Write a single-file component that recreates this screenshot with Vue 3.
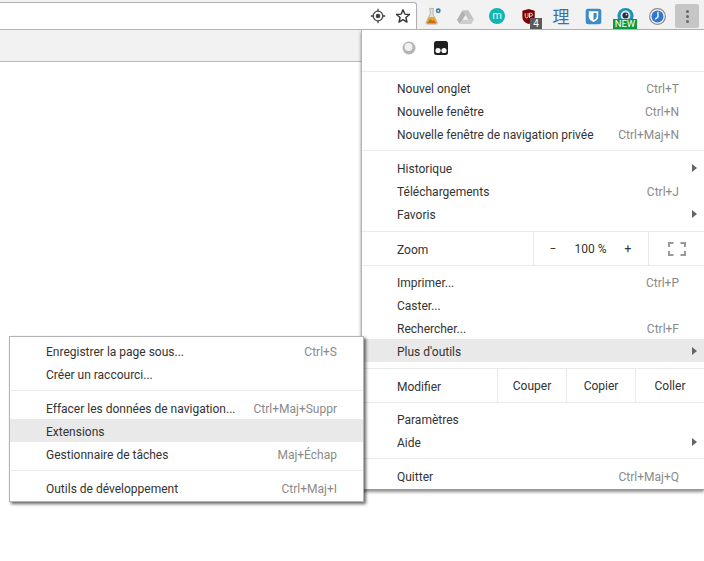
<template>
  <div class="screen">
    <!-- Toolbar -->
    <header class="toolbar">
      <div class="omnibox">
        <svg class="omni-icon" viewBox="0 0 16 16">
          <circle cx="8" cy="8" r="4.8" fill="none" stroke="#444" stroke-width="1.3" />
          <circle cx="8" cy="8" r="2.3" fill="#444" />
          <path d="M8 .8v2.4M8 12.8v2.4M.8 8h2.4M12.8 8h2.4" stroke="#444" stroke-width="1.3" />
        </svg>
        <svg class="omni-icon star" viewBox="0 0 16 16">
          <path d="M8 1.8l1.8 4.3 4.7.4-3.6 3 1.1 4.6L8 11.7l-4 2.4 1.1-4.6-3.6-3 4.7-.4z" fill="none" stroke="#333" stroke-width="1.4" stroke-linejoin="round" />
        </svg>
      </div>
      <div class="ext-row">
        <div class="ext">
          <svg viewBox="0 0 20 20" class="ext-svg">
            <path d="M6 1.500h4v1h-.5v5l4.300 8.500c.5 1-.1 2-1.200 2H3.400c-1.100 0-1.700-1-1.200-2L6.500 7.500v-5H6z" fill="#e4dfd6" stroke="#a9a59c" stroke-width=".8" />
            <path d="M5 10.500h6l2.300 5.700c.3.800-.1 1.300-.8 1.300H3.500c-.7 0-1.100-.5-.8-1.300z" fill="#e9a92c" />
            <path d="M3 17.200l3.500-4.200 2 2 1.500-1.500 3 3.700z" fill="#d9641e" />
            <circle cx="7" cy="14.500" r="1.300" fill="#6f9a35" />
            <circle cx="15" cy="4" r="2.600" fill="#3a7c99" />
            <circle cx="15" cy="4" r=".9" fill="#fff" />
          </svg>
        </div>
        <div class="ext">
          <svg viewBox="0 0 20 20" class="ext-svg">
            <path d="M7 3.500h6l6 10h-6z" fill="#c2c2c2" />
            <path d="M7 3.500l-6 10 3 4.500L10 8.500z" fill="#b2b2b2" />
            <path d="M7 13.500h12l-3 4.500H4z" fill="#cdcdcd" />
          </svg>
        </div>
        <div class="ext">
          <span class="m-badge">m</span>
        </div>
        <div class="ext">
          <svg viewBox="0 0 20 20" class="ext-svg shield">
            <path d="M9 2l6.500 2v6.500c0 3.800-3 6-6.500 7.500-3.500-1.500-6.500-3.700-6.500-7.500V4z" fill="#800000" />
            <path d="M5.500 6.500v3.500c0 1 .6 1.500 1.500 1.500s1.500-.5 1.500-1.500V6.500M10 11.500v-5h1.500a1.500 1.500 0 010 3.200H10" fill="none" stroke="#f3e3e3" stroke-width="1" />
          </svg>
          <span class="count">4</span>
        </div>
        <div class="ext">
          <span class="li">理</span>
        </div>
        <div class="ext">
          <svg viewBox="0 0 20 20" class="ext-svg">
            <rect x="1.800" y="1.800" width="16.400" height="16.400" rx="2.500" fill="#3c8dc6" />
            <path d="M5 4.500h10v5.800c0 2.700-2.400 4.300-5 5.400-2.600-1.100-5-2.700-5-5.400z" fill="#fff" />
            <path d="M10 6.200h3.300v4.100c0 1.700-1.600 2.800-3.300 3.600z" fill="#3c8dc6" />
          </svg>
        </div>
        <div class="ext">
          <svg viewBox="0 0 20 20" class="ext-svg">
            <circle cx="10" cy="9.500" r="8.500" fill="#1f90b4" />
            <circle cx="10" cy="9" r="5.200" fill="#d6e2e6" />
            <circle cx="10" cy="9" r="3.200" fill="#22333f" />
            <circle cx="11" cy="8" r=".9" fill="#cfd8dc" />
          </svg>
          <span class="new">NEW</span>
        </div>
        <div class="ext">
          <svg viewBox="0 0 20 20" class="ext-svg">
            <circle cx="10" cy="10" r="8.300" fill="#f4f4f4" stroke="#8b8b8b" stroke-width="1.300" />
            <circle cx="10" cy="10" r="6.300" fill="#2f77cf" />
            <path d="M10.500 5v5.500L7.500 13" fill="none" stroke="#fff" stroke-width="1.400" />
          </svg>
        </div>
      </div>
      <button class="kebab">
        <i></i><i></i><i></i>
      </button>
    </header>

    <div class="body">
      <!-- Page behind the menu -->
      <div class="page">
        <div class="page-bar"></div>
      </div>

      <!-- Main menu -->
      <nav class="menu">
        <div class="menu-icons">
          <svg viewBox="0 0 16 16" class="menu-icon">
            <circle cx="8" cy="8" r="6.500" fill="#b4b4b4" />
            <circle cx="7.500" cy="7" r="4" fill="#f0f0f0" />
          </svg>
          <svg viewBox="0 0 16 16" class="menu-icon">
            <path d="M3.500 1h9A2.500 2.500 0 0115 3.500V12.500a2.500 2.500 0 01-2.500 2.500h-9A2.500 2.500 0 011 12.500V3.500A2.500 2.500 0 013.500 1z" fill="#202020" />
            <circle cx="5" cy="10.500" r="2.600" fill="#fff" />
            <circle cx="11" cy="10.500" r="2.600" fill="#fff" />
          </svg>
        </div>
        <template v-for="(group, g) in mainGroups" :key="g">
          <div class="sep"></div>
          <div v-if="group.type === 'zoom'" class="split-row">
            <span class="split-label">Zoom</span>
            <div class="zoom-cell">
              <span class="zoom-btn">−</span>
              <span class="zoom-val">100 %</span>
              <span class="zoom-btn">+</span>
            </div>
            <div class="full-cell">
              <svg viewBox="0 0 18 14" class="full-icon">
                <path d="M1 5V1h4.500M12.500 1H17v4M17 9v4h-4.500M5.500 13H1V9" fill="none" stroke="#999" stroke-width="2" />
              </svg>
            </div>
          </div>
          <div v-else-if="group.type === 'edit'" class="split-row">
            <span class="split-label">Modifier</span>
            <span v-for="a in group.actions" :key="a" class="edit-btn">{{ a }}</span>
          </div>
          <div v-else class="group" :class="group.pad">
            <div v-for="item in group.items" :key="item.label" class="row" :class="{ active: item.active }">
              <span class="label">{{ item.label }}</span>
              <span v-if="item.key" class="key">{{ item.key }}</span>
              <span v-if="item.sub" class="arrow"></span>
            </div>
          </div>
        </template>
      </nav>

      <!-- Submenu -->
      <div class="submenu">
        <template v-for="(group, g) in subGroups" :key="g">
          <div v-if="g > 0" class="sep"></div>
          <div class="group">
            <div v-for="item in group" :key="item.label" class="row" :class="{ active: item.active }">
              <span class="label">{{ item.label }}</span>
              <span v-if="item.key" class="key">{{ item.key }}</span>
            </div>
          </div>
        </template>
      </div>
    </div>
  </div>
</template>

<script setup>
const mainGroups = [
  { pad: 'first', items: [
    { label: 'Nouvel onglet', key: 'Ctrl+T' },
    { label: 'Nouvelle fenêtre', key: 'Ctrl+N' },
    { label: 'Nouvelle fenêtre de navigation privée', key: 'Ctrl+Maj+N' }
  ] },
  { pad: 'second', items: [
    { label: 'Historique', sub: true },
    { label: 'Téléchargements', key: 'Ctrl+J' },
    { label: 'Favoris', sub: true }
  ] },
  { type: 'zoom' },
  { pad: 'tools', items: [
    { label: 'Imprimer...', key: 'Ctrl+P' },
    { label: 'Caster...' },
    { label: 'Rechercher...', key: 'Ctrl+F' },
    { label: "Plus d'outils", sub: true, active: true }
  ] },
  { type: 'edit', actions: ['Couper', 'Copier', 'Coller'] },
  { pad: 'first', items: [
    { label: 'Paramètres' },
    { label: 'Aide', sub: true }
  ] },
  { pad: 'last', items: [
    { label: 'Quitter', key: 'Ctrl+Maj+Q' }
  ] }
]

const subGroups = [
  [
    { label: 'Enregistrer la page sous...', key: 'Ctrl+S' },
    { label: 'Créer un raccourci...' }
  ],
  [
    { label: 'Effacer les données de navigation...', key: 'Ctrl+Maj+Suppr' },
    { label: 'Extensions', active: true },
    { label: 'Gestionnaire de tâches', key: 'Maj+Échap' }
  ],
  [
    { label: 'Outils de développement', key: 'Ctrl+Maj+I' }
  ]
]
</script>

<style>
html, body {
  background: #fff;
}
</style>

<style scoped>
.screen {
  width: 704px;
  height: 561px;
  overflow: hidden;
  display: flex;
  flex-direction: column;
  font-family: Roboto, "Liberation Sans", sans-serif;
  font-size: 12px;
  color: #333;
  background: #fff;
}

/* Toolbar */
.toolbar {
  height: 30px;
  flex: none;
  display: flex;
  background: #f2f2f2;
  border-bottom: 1px solid #b4b4b4;
  box-sizing: border-box;
}

.omnibox {
  width: 417px;
  margin-top: 2px;
  flex: none;
  box-sizing: border-box;
  background: #fff;
  border: 1px solid #b0b0b0;
  border-left: 0;
  border-bottom: 0;
  border-top-right-radius: 3px;
  display: flex;
  justify-content: flex-end;
  align-items: center;
  gap: 9px;
  padding-right: 5px;
}

.omni-icon {
  width: 16px;
  height: 16px;
}

.ext-row {
  display: flex;
  width: 256px;
}

.ext {
  position: relative;
  width: 32px;
  height: 29px;
  display: flex;
  align-items: center;
  justify-content: center;
  padding-top: 3px;
  box-sizing: border-box;
}

.ext-svg {
  width: 19px;
  height: 19px;
}

.m-badge {
  width: 16px;
  height: 16px;
  border-radius: 50%;
  background: #12b5b0;
  color: #e6fbfa;
  font-size: 11px;
  line-height: 15px;
  text-align: center;
}

.count {
  position: absolute;
  left: 17px;
  top: 18px;
  width: 12px;
  height: 11px;
  background: #5a5a5a;
  color: #fff;
  font-size: 10px;
  line-height: 11px;
  text-align: center;
}

.li {
  font-family: "Noto Sans CJK SC", sans-serif;
  font-size: 17px;
  line-height: 20px;
  color: #3f6fa8;
}

.new {
  position: absolute;
  left: 4px;
  top: 19px;
  width: 24px;
  height: 10px;
  background: #0b9a3c;
  color: #fff;
  font-size: 9.500px;
  line-height: 10px;
  text-align: center;
}

.kebab {
  width: 24px;
  height: 24px;
  margin: 4px 0 0 2px;
  padding: 0;
  border: 0;
  border-radius: 2px;
  background: #c6c6c6;
  display: flex;
  flex-direction: column;
  align-items: center;
  justify-content: center;
  gap: 2px;
}

.kebab i {
  width: 3px;
  height: 3px;
  border-radius: 50%;
  background: #666;
}

/* Body */
.body {
  position: relative;
  flex: 1;
  display: flex;
  align-items: flex-start;
}

.page {
  width: 361px;
  flex: none;
}

.page-bar {
  height: 32px;
  box-sizing: border-box;
  background: #f2f2f2;
  border-bottom: 1px solid #b9b9b9;
}

/* Main menu */
.menu {
  width: 343px;
  flex: none;
  box-sizing: border-box;
  background: #fff;
  border-left: 1px solid #b4b4b4;
  border-bottom: 1px solid #999;
  box-shadow: 0 2px 3px rgba(0, 0, 0, 0.45);
}

.menu-icons {
  height: 41px;
  display: flex;
  align-items: center;
  padding-left: 39px;
  padding-bottom: 6px;
  box-sizing: border-box;
}

.menu-icon {
  width: 16px;
  height: 16px;
  margin-right: 16px;
}

.sep {
  height: 1px;
  background: #e9e9e9;
}

.group {
  padding: 5px 0;
}

.group.first {
  padding: 4px 0 5px;
}

.group.second {
  padding: 5px 0 6px;
}

.group.tools {
  padding: 4px 0 6px;
}

.group.last {
  padding: 5px 0 2px;
}

.row {
  position: relative;
  height: 23px;
  box-sizing: border-box;
  display: flex;
  align-items: center;
  justify-content: space-between;
  padding: 2px 25px 0 35px;
}

.row.active {
  background: #e9e9e9;
}

.key {
  color: #8a8a8a;
}

.arrow {
  position: absolute;
  right: 7px;
  top: 8px;
  width: 0;
  height: 0;
  border-left: 5px solid #666;
  border-top: 4px solid transparent;
  border-bottom: 4px solid transparent;
}

.split-row {
  height: 33px;
  display: flex;
  align-items: center;
}

.split-label {
  flex: 1;
  padding: 2px 0 0 35px;
}

.zoom-cell {
  width: 116px;
  height: 100%;
  flex: none;
  box-sizing: border-box;
  border-left: 1px solid #e9e9e9;
  border-right: 1px solid #e9e9e9;
  display: flex;
  align-items: center;
  justify-content: space-between;
  padding: 1px 16px 0 15px;
}

.zoom-btn {
  width: 8px;
  text-align: center;
}

.full-cell {
  width: 55px;
  flex: none;
  display: flex;
  justify-content: center;
}

.full-icon {
  width: 18px;
  height: 14px;
}

.edit-btn {
  width: 69px;
  height: 100%;
  flex: none;
  box-sizing: border-box;
  border-left: 1px solid #e9e9e9;
  display: flex;
  align-items: center;
  justify-content: center;
}

/* Submenu */
.submenu {
  position: absolute;
  left: 9px;
  top: 306px;
  width: 355px;
  box-sizing: border-box;
  background: #fff;
  border: 1px solid #b4b4b4;
  padding: 2px 0 2px;
  box-shadow: 2px 2px 3px rgba(0, 0, 0, 0.6);
}

.submenu .group {
  padding: 5px 0;
}

.submenu .group:first-of-type {
  padding-top: 0;
}

.submenu .group:last-of-type {
  padding-bottom: 0;
}

.submenu .row {
  padding: 2px 26px 0 36px;
}

.submenu .sep {
  margin: 0 1px;
}
</style>
